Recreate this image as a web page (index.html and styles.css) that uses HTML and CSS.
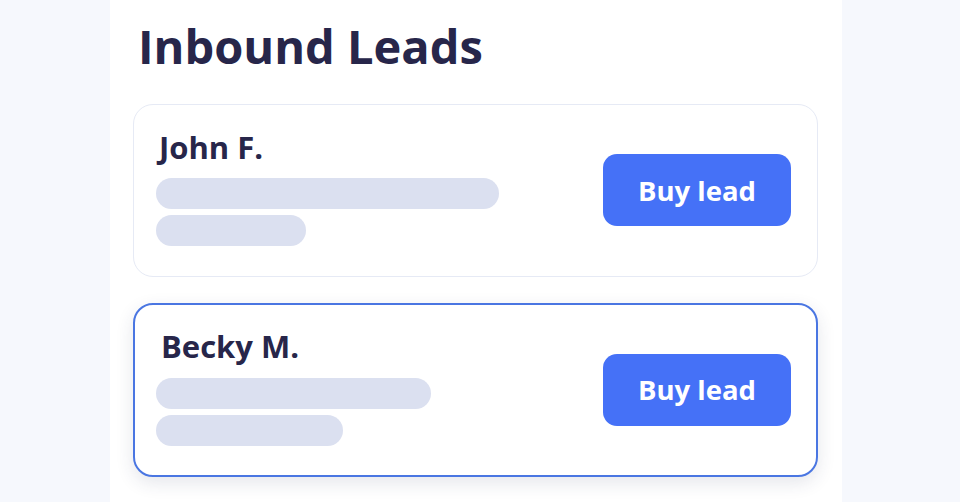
FILE: index.html
```html
<!DOCTYPE html>
<html>
<head>
<meta charset="utf-8">
<link rel="stylesheet" href="styles.css">
</head>
<body>
<div class="page">
  <div class="panel">
    <h1 class="title">Inbound Leads</h1>
    <div class="card">
      <div class="info">
        <div class="name">John F.</div>
        <div class="bar" style="width:343px"></div>
        <div class="bar" style="width:150px"></div>
      </div>
      <button class="buy">Buy lead</button>
    </div>
    <div class="card active">
      <div class="info">
        <div class="name">Becky M.</div>
        <div class="bar" style="width:275px"></div>
        <div class="bar" style="width:187px"></div>
      </div>
      <button class="buy">Buy lead</button>
    </div>
  </div>
</div>
</body>
</html>
```
FILE: styles.css
```css
html, body {
  margin: 0;
  padding: 0;
  background: #f6f8fd;
  font-family: "Open Sans", "Noto Sans", sans-serif;
}
.page {
  width: 960px;
  height: 502px;
  overflow: hidden;
}
.panel {
  margin-left: 110px;
  width: 732px;
  height: 502px;
  background: #ffffff;
  padding: 18px 24px 0 23px;
  box-sizing: border-box;
}
.title {
  margin: 0 0 0 5px;
  font-size: 47px;
  line-height: 1.2;
  font-weight: 700;
  color: #27264a;
  height: 86px;
}
.card {
  display: flex;
  align-items: center;
  justify-content: space-between;
  border: 1px solid #e6eaf5;
  border-radius: 20px;
  padding: 24px 26px 30px 22px;
  margin-bottom: 26px;
  background: #fff;
}
.card.active {
  border: 2px solid #4a76e2;
  padding: 23px 25px 29px 21px;
  box-shadow: 0 6px 18px rgba(40, 50, 90, 0.12);
}
.info {
  display: flex;
  flex-direction: column;
}
.name {
  font-size: 31px;
  line-height: 36px;
  font-weight: 700;
  color: #27264a;
  margin-left: 3px;
  margin-bottom: 13px;
}
.active .name {
  margin-left: 5px;
  margin-bottom: 14px;
}
.bar {
  height: 31px;
  border-radius: 16px;
  background: #dbe0f0;
}
.bar + .bar {
  margin-top: 6px;
}
.buy {
  width: 188px;
  height: 72px;
  border: none;
  border-radius: 14px;
  background: #4571f7;
  color: #fff;
  font-family: "Open Sans", "Noto Sans", sans-serif;
  font-size: 27.5px;
  font-weight: 700;
  padding: 0;
  margin-top: 5px;
}
```
